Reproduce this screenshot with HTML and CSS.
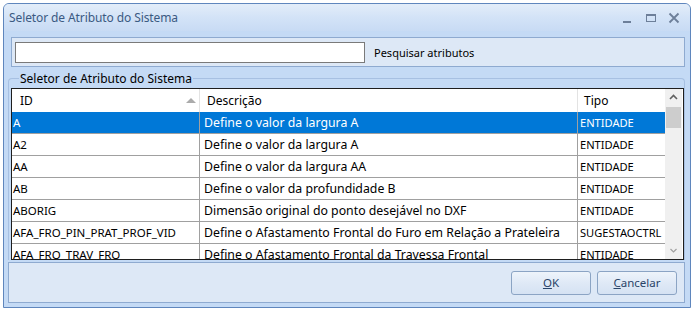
FILE: index.html
```html
<!DOCTYPE html>
<html lang="pt">
<head>
<meta charset="utf-8">
<title>Seletor de Atributo do Sistema</title>
<link rel="stylesheet" href="styles.css">
</head>
<body>
<div class="window">
  <div class="titlebar">
    <span class="title">Seletor de Atributo do Sistema</span>
    <div class="controls">
      <svg class="ctl" width="12" height="12" viewBox="0 0 12 12"><rect x="1" y="9" width="8" height="2" fill="#6d7f99"/></svg>
      <svg class="ctl" width="12" height="12" viewBox="0 0 12 12"><rect x="1.5" y="2.5" width="9" height="7" fill="none" stroke="#6d7f99"/><rect x="1" y="2" width="10" height="2" fill="#6d7f99"/></svg>
      <svg class="ctl" width="12" height="12" viewBox="0 0 12 12"><path d="M1.5 1.5 L10.5 10.5 M10.5 1.5 L1.5 10.5" stroke="#6d7f99" stroke-width="1.8"/></svg>
    </div>
  </div>
  <div class="body">
    <div class="searchpanel">
      <input class="search" type="text">
      <span class="searchlabel">Pesquisar atributos</span>
    </div>
    <fieldset class="group">
      <legend class="legend">Seletor de Atributo do Sistema</legend>
      <div class="grid">
        <div class="tablearea">
          <div class="row head">
            <div class="c c1">ID<span class="sort"></span></div>
            <div class="c c2">Descrição</div>
            <div class="c c3">Tipo</div>
          </div>
          <div class="row sel">
            <div class="c c1">A</div>
            <div class="c c2">Define o valor da largura A</div>
            <div class="c c3">ENTIDADE</div>
          </div>
          <div class="row">
            <div class="c c1">A2</div>
            <div class="c c2">Define o valor da largura A</div>
            <div class="c c3">ENTIDADE</div>
          </div>
          <div class="row">
            <div class="c c1">AA</div>
            <div class="c c2">Define o valor da largura AA</div>
            <div class="c c3">ENTIDADE</div>
          </div>
          <div class="row">
            <div class="c c1">AB</div>
            <div class="c c2">Define o valor da profundidade B</div>
            <div class="c c3">ENTIDADE</div>
          </div>
          <div class="row">
            <div class="c c1">ABORIG</div>
            <div class="c c2">Dimensão original do ponto desejável no DXF</div>
            <div class="c c3">ENTIDADE</div>
          </div>
          <div class="row">
            <div class="c c1">AFA_FRO_PIN_PRAT_PROF_VID</div>
            <div class="c c2">Define o Afastamento Frontal do Furo em Relação a Prateleira</div>
            <div class="c c3">SUGESTAOCTRL</div>
          </div>
          <div class="row">
            <div class="c c1">AFA_FRO_TRAV_FRO</div>
            <div class="c c2">Define o Afastamento Frontal da Travessa Frontal</div>
            <div class="c c3">ENTIDADE</div>
          </div>
        </div>
        <div class="scrollbar">
          <svg class="arrow" width="17" height="17" viewBox="0 0 17 17"><path d="M5 10 L8.5 6.5 L12 10" fill="none" stroke="#606060" stroke-width="1.6"/></svg>
          <div class="thumb"></div>
          <div class="track"></div>
          <svg class="arrow" width="17" height="17" viewBox="0 0 17 17"><path d="M5.5 7 L8.5 10 L11.5 7" fill="none" stroke="#a0a0a0" stroke-width="1.2"/></svg>
        </div>
      </div>
    </fieldset>
    <div class="buttonpanel">
      <button class="btn"><u>O</u>K</button>
      <button class="btn"><u>C</u>ancelar</button>
    </div>
  </div>
</div>
</body>
</html>
```

FILE: styles.css
```css
* { box-sizing: border-box; }
html, body { margin: 0; padding: 0; background: #ffffff; }
body {
  font-family: "Noto Sans", "Open Sans", sans-serif;
  font-size: 11px;
  color: #000;
  width: 695px;
  height: 313px;
  overflow: hidden;
}
.window {
  margin: 3px 0 0 3px;
  width: 688px;
  height: 305px;
  border: 1px solid #5f86bd;
  border-radius: 6px 6px 0 0;
  background: #c4daf5;
  display: flex;
  flex-direction: column;
}
.titlebar {
  height: 27px;
  flex: none;
  display: flex;
  align-items: center;
  padding: 0 0 0 5px;
  background: linear-gradient(#e3edf9, #d3e3f7 50%, #c8dbf4);
  border-radius: 5px 5px 0 0;
}
.title {
  color: #3b5a82;
  font-size: 12px;
  flex: 1;
  letter-spacing: -0.1px;
}
.controls {
  display: flex;
  gap: 11px;
  padding-right: 10px;
  align-items: center;
}
.ctl { display: block; }
.body {
  flex: 1;
  display: flex;
  flex-direction: column;
  padding: 6px 5px 4px 4px;
}
.searchpanel {
  height: 30px;
  flex: none;
  margin: 0 0 0 3px;
  border: 1px solid #8eaad0;
  background: #dde8f6;
  display: flex;
  align-items: center;
  padding-left: 3px;
}
.search {
  width: 350px;
  height: 21px;
  border: 1px solid #7a7a7a;
  background: #fff;
  margin: 0;
  padding: 0;
}
.searchlabel {
  margin-left: 9px;
  font-size: 11px;
  color: #000;
}
.group {
  margin: 5px 0 0 0;
  padding: 3px 0 0 2px;
  border: 1px solid #a7c0e2;
  border-bottom: none;
  border-radius: 4px 4px 0 0;
  min-width: 0;
  height: 188px;
  flex: none;
}
.legend {
  padding: 0 1px;
  margin-left: 8px;
  font-size: 12px;
  line-height: 13px;
  color: #000;
}
.grid {
  display: flex;
  border: 1px solid #1e1e1e;
  height: 172px;
  background: #fff;
}
.tablearea {
  width: 653px;
  overflow: hidden;
}
.row {
  display: flex;
  height: 22px;
  border-bottom: 1px solid #a0a0a0;
  background: #fff;
}
.row.head { border-bottom: none; height: 23px; }
.row.sel { background: #0078d7; color: #fff; }
.c {
  display: flex;
  align-items: center;
  white-space: nowrap;
  overflow: hidden;
  font-size: 12px;
}
.c1 { width: 188px; padding-left: 1px; border-right: 1px solid #a0a0a0; font-size: 11.5px; }
.c2 { width: 378px; padding-left: 4px; border-right: 1px solid #a0a0a0; font-size: 12.3px; }
.c3 { flex: 1; padding-left: 2px; font-size: 11.1px; }
.head .c1 { padding-left: 8px; font-size: 12px; }
.head .c2 { padding-left: 7px; font-size: 12px; }
.head .c3 { padding-left: 6px; font-size: 12px; }
.head .c { border-right-color: #e3e3e3; }
.sort {
  margin-left: auto;
  margin-right: 3px;
  width: 0;
  height: 0;
  border-left: 5px solid transparent;
  border-right: 5px solid transparent;
  border-bottom: 5px solid #ababab;
}
.scrollbar {
  width: 17px;
  flex: none;
  background: #f0f0f0;
  display: flex;
  flex-direction: column;
}
.arrow { display: block; flex: none; }
.thumb {
  height: 21px;
  margin: 1px 1px 0 1px;
  background: #cdcdcd;
  flex: none;
}
.track { flex: 1; }
.buttonpanel {
  margin-top: 2px;
  height: 41px;
  flex: none;
  border: 1px solid #8eaad0;
  background: #dde8f6;
  display: flex;
  justify-content: flex-end;
  align-items: center;
  gap: 6px;
  padding-right: 7px;
}
.btn {
  width: 80px;
  height: 24px;
  border: 1px solid #8ba4c4;
  border-radius: 3px;
  background: linear-gradient(#eef4fb, #dfe9f6 50%, #d5e2f3);
  font-family: "Noto Sans", "Open Sans", sans-serif;
  font-size: 11.5px;
  color: #2a4468;
  padding: 0;
}
```
